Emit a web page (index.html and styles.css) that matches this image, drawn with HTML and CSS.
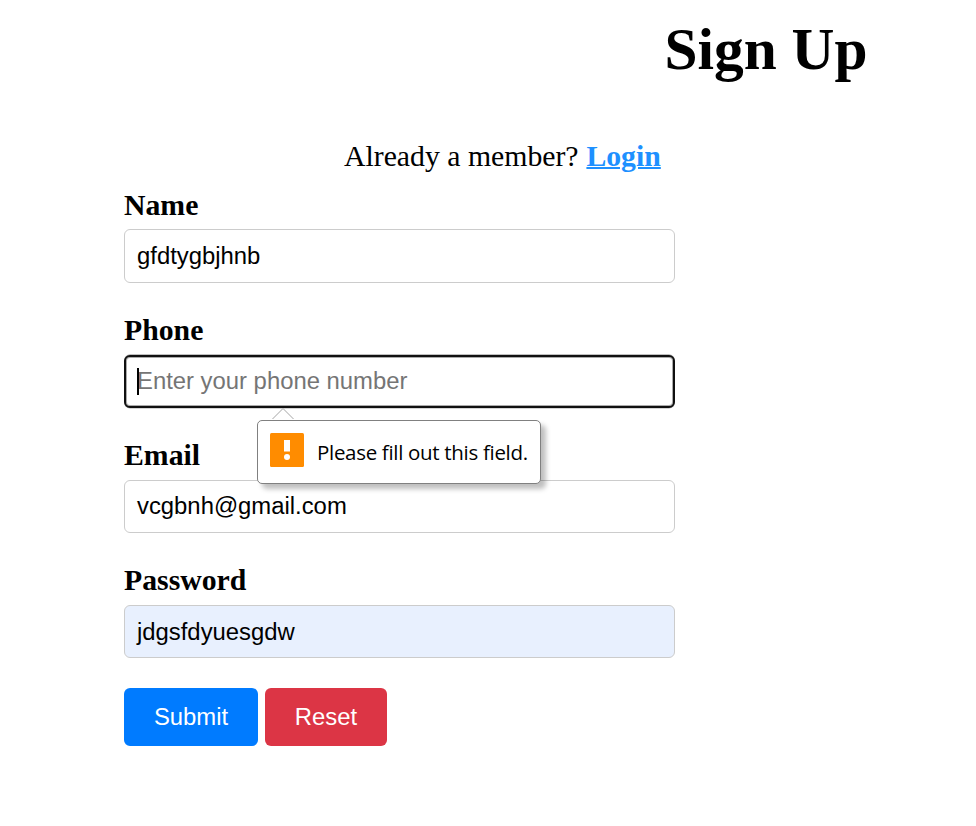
FILE: index.html
```html
<!DOCTYPE html>
<html lang="en">
<head>
<meta charset="utf-8">
<title>Sign Up</title>
<link rel="stylesheet" href="styles.css">
</head>
<body>
<h1>Sign Up</h1>
<main class="form">
  <p class="member">Already a member? <a href="#">Login</a></p>
  <div class="group"><label>Name</label><div class="field">gfdtygbjhnb</div></div>
  <div class="group"><label>Phone</label><div class="field focused"><span class="caret"></span>Enter your phone number</div>
    <div class="tip">
      <svg class="arrow" width="24" height="12" viewBox="0 0 24 12"><path d="M1.500 11 12 .5 22.500 11" fill="#fff" stroke="#a4a4a4"/></svg>
      <svg class="warn" width="34" height="34" viewBox="0 0 34 34"><rect width="34" height="34" rx="1.500" fill="#ff8c00"/><path d="M14 7h6v11.500h-6z" fill="#fff"/><circle cx="17" cy="24" r="3" fill="#fff"/></svg>
      <span>Please fill out this field.</span>
    </div>
  </div>
  <div class="group"><label>Email</label><div class="field email">vcgbnh@gmail.com</div></div>
  <div class="group"><label>Password</label><div class="field filled">jdgsfdyuesgdw</div></div>
  <div class="actions"><button class="submit">Submit</button><button class="reset">Reset</button></div>
</main>
</body>
</html>
```
FILE: styles.css
```css
* { box-sizing: border-box; }
body { margin: 0; background: #fff; color: #000; font-family: "Liberation Serif", serif; font-size: 29.75px; overflow: hidden; }
h1 { margin: 15px 0 0 664.5px; font-size: 59.4px; line-height: 69px; white-space: nowrap; }
.form { width: 551px; margin: 55px 0 0 124px; }
.member { margin: 0 0 14.9px 220px; line-height: 34px; white-space: nowrap; }
.member a { margin-left: .4px; color: #1e90ff; font-weight: bold; text-decoration-thickness: 2px; }
.group { position: relative; height: 125.1px; }
label { display: block; line-height: 34px; margin-bottom: 7.5px; font-weight: bold; }
.field { position: relative; height: 53.2px; border: 1px solid #ccc; border-radius: 6px; padding: 0 12px; font: 23.85px/51px "Liberation Sans", sans-serif; background: #fff; }
.focused { height: 52.5px; margin-top: 8.2px; border: 2px solid #101010; padding: 0 11px; line-height: 48px; color: #757575; box-shadow: 0 -1px 0 -.3px #aaa, 0 .5px 0 #aaa, inset 0 0 0 1px #aaa; }
.email { line-height: 50px; }
.filled { background: #e8f0fe; }
.caret { position: absolute; left: 11px; top: 11px; width: 2px; height: 27px; background: #000; }
.tip { position: absolute; z-index: 2; left: 133px; top: 107px; width: 284px; height: 64px; display: flex; align-items: center; gap: 13px; padding: 0 12px; border: 1px solid #808080; border-radius: 5px; background: #fff; box-shadow: 5px 5px 5px rgba(0,0,0,.25); font: 20.5px/28px "Open Sans", sans-serif; letter-spacing: -.31px; white-space: nowrap; }
.tip svg { flex: none; }
.warn { margin-bottom: 4px; }
.tip .arrow { position: absolute; left: 13px; top: -13px; }
.actions { display: flex; gap: 7px; }
button { height: 58px; border: 0; border-radius: 6px; color: #fff; font: 23.85px "Liberation Sans", sans-serif; padding: 0; }
.submit { width: 134px; background: #007bff; }
.reset { width: 122px; background: #dc3545; }
```
